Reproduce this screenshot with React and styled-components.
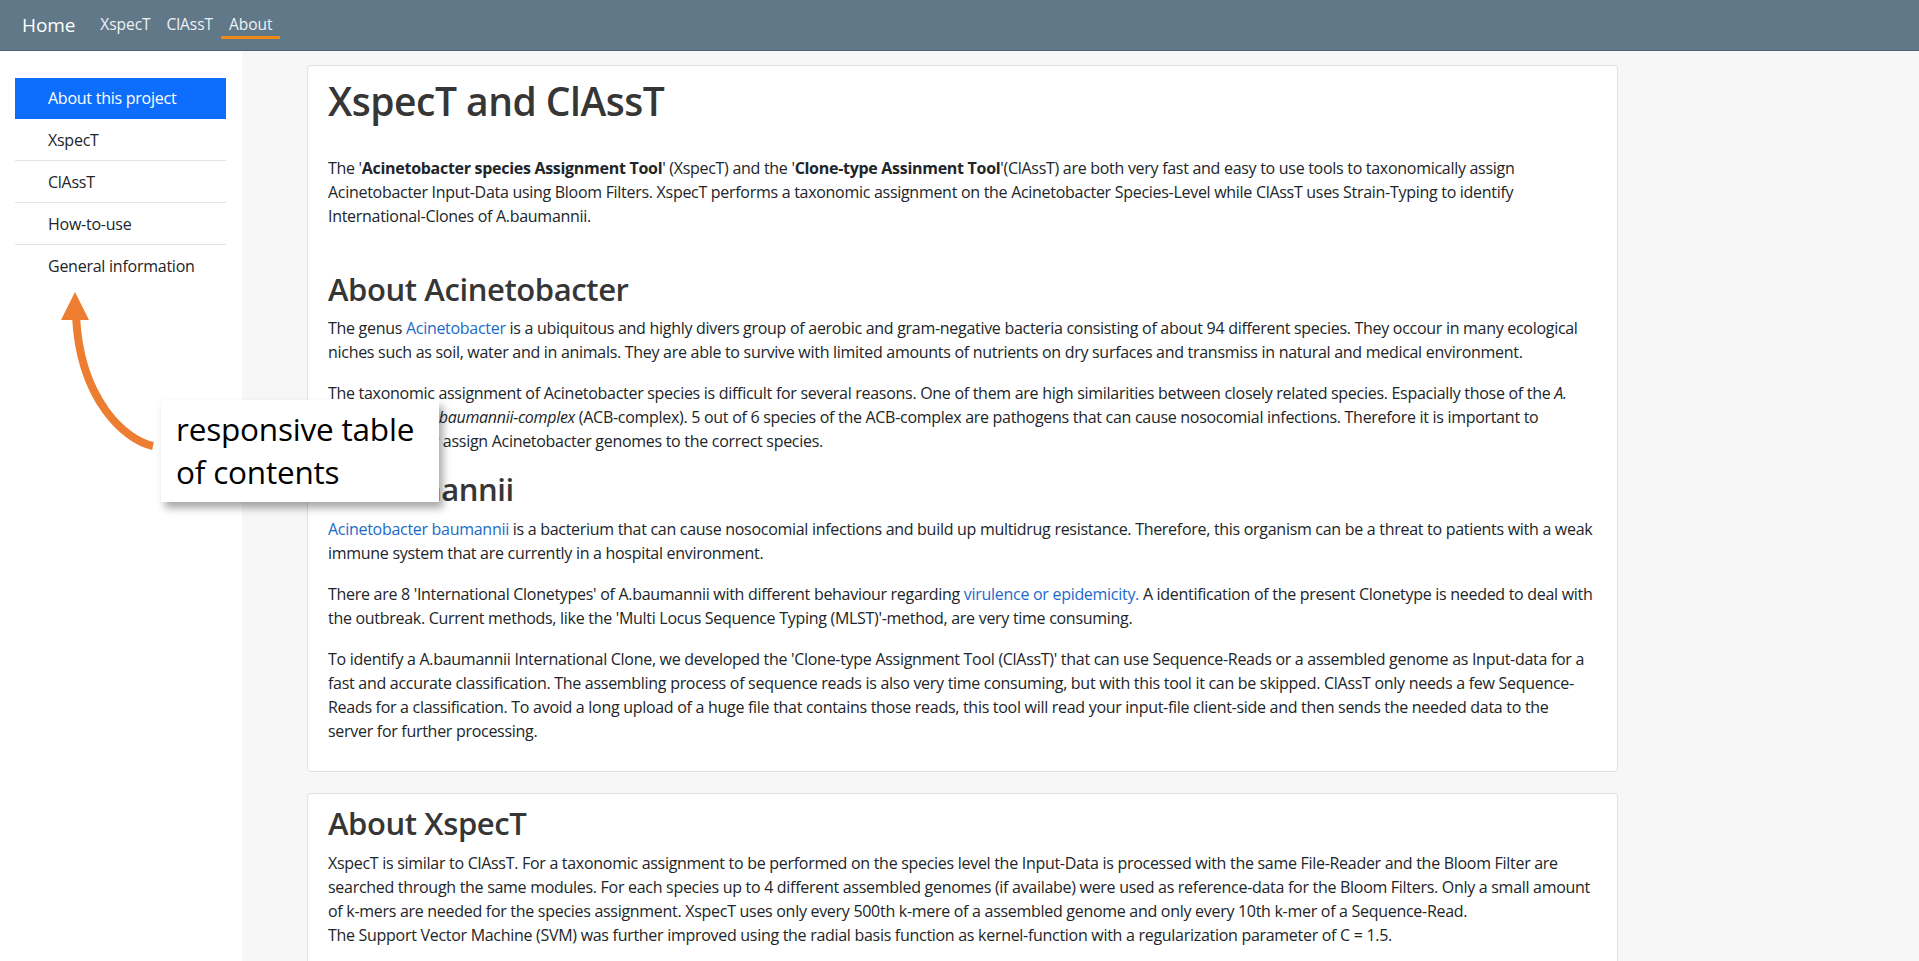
import React from "react";
import styled, { createGlobalStyle } from "styled-components";

const GlobalStyle = createGlobalStyle`
  html, body {
    margin: 0;
    padding: 0;
  }
  body {
    font-family: "Open Sans", "Noto Sans", sans-serif;
    background: #f7f7f7;
    color: #212529;
  }
  * { box-sizing: border-box; }
`;

const Page = styled.div`
  position: relative;
  min-height: 961px;
  display: flex;
  flex-direction: column;
`;

const NavBar = styled.nav`
  height: 51px;
  flex: none;
  display: flex;
  align-items: flex-start;
  padding-left: 22px;
  background: #617889;
  border-bottom: 1px solid #4d6272;
`;

const Brand = styled.a`
  margin-top: 13px;
  margin-right: 17px;
  font-size: 19px;
  line-height: 24px;
  color: #ffffff;
  text-decoration: none;
  letter-spacing: -0.1px;
`;

const NavLink = styled.a`
  margin-top: 14px;
  padding: 0 8px 2px;
  font-size: 15.5px;
  line-height: 20px;
  letter-spacing: -0.05px;
  color: #eef2f5;
  text-decoration: none;
  border-bottom: 3px solid ${(p) => (p.$active ? "#ef8a17" : "transparent")};
  border-radius: 1px;
`;

const Layout = styled.div`
  flex: 1;
  display: flex;
  align-items: stretch;
`;

const Sidebar = styled.aside`
  width: 242px;
  flex: none;
  background: #ffffff;
  padding: 27px 16px 0 15px;
`;

const TocList = styled.ul`
  list-style: none;
  margin: 0;
  padding: 0;
`;

const TocItem = styled.li`
  padding: ${(p) => (p.$active ? "8px 0 9px 33px" : "9px 0 8px 33px")};
  font-size: 16px;
  line-height: 24px;
  letter-spacing: -0.25px;
  background: ${(p) => (p.$active ? "#0d6efd" : "transparent")};
  color: ${(p) => (p.$active ? "#ffffff" : "#212529")};
  border-bottom: ${(p) => (p.$last || p.$active ? "none" : "1px solid #e4e4e4")};
`;

const Main = styled.main`
  flex: 1;
  padding: 14px 0 0 65px;
  display: flex;
  flex-direction: column;
  gap: 21px;
`;

const Card = styled.section`
  width: 1311px;
  background: #ffffff;
  border: 1px solid #dfdfdf;
  border-radius: 4px;
  padding: 10px 21px ${(p) => p.$pb || 11}px 20px;
`;

const Title = styled.h1`
  margin: 0 0 30px;
  font-size: 39px;
  line-height: 50px;
  font-weight: 600;
  color: #363636;
  letter-spacing: -0.5px;
`;

const Heading = styled.h2`
  margin: ${(p) => p.$mt || 0}px 0 ${(p) => p.$mb || 9.5}px;
  font-size: 31px;
  line-height: 38px;
  font-weight: 600;
  color: #363636;
  letter-spacing: -0.4px;
`;

const Para = styled.p`
  margin: 0 0 ${(p) => p.$mb ?? 17}px;
  font-size: 16px;
  line-height: 24px;
  letter-spacing: -0.29px;
  color: #212529;
`;

const Link = styled.a`
  color: #1b6ac9;
  text-decoration: none;
`;

const Callout = styled.div`
  position: absolute;
  left: 161px;
  top: 400px;
  width: 278px;
  height: 102px;
  padding: 7px 0 0 15px;
  background: #ffffff;
  box-shadow: 4px 6px 8px rgba(0, 0, 0, 0.35);
  font-size: 31.5px;
  line-height: 43px;
  color: #000000;
  letter-spacing: -0.2px;
  white-space: nowrap;
`;

const ArrowSvg = styled.svg`
  position: absolute;
  left: 0;
  top: 0;
  width: 200px;
  height: 520px;
  pointer-events: none;
`;

const tocItems = [
  "About this project",
  "XspecT",
  "ClAssT",
  "How-to-use",
  "General information",
];

export default function App() {
  return (
    <Page>
      <GlobalStyle />
      <NavBar>
        <Brand>Home</Brand>
        <NavLink>XspecT</NavLink>
        <NavLink>ClAssT</NavLink>
        <NavLink $active>About</NavLink>
      </NavBar>
      <Layout>
        <Sidebar>
          <TocList>
            {tocItems.map((t, i) => (
              <TocItem key={t} $active={i === 0} $last={i === tocItems.length - 1}>
                {t}
              </TocItem>
            ))}
          </TocList>
        </Sidebar>
        <Main>
          <Card>
            <Title>XspecT and ClAssT</Title>
            <Para $mb={42}>
              The '<b>Acinetobacter species Assignment Tool</b>' (XspecT) and the '
              <b>Clone-type Assinment Tool</b>'(ClAssT) are both very fast and easy to use
              tools to taxonomically assign Acinetobacter Input-Data using Bloom Filters.
              XspecT performs a taxonomic assignment on the Acinetobacter Species-Level while
              ClAssT uses Strain-Typing to identify International-Clones of A.baumannii.
            </Para>
            <Heading $mb={7.5}>About Acinetobacter</Heading>
            <Para>
              The genus <Link>Acinetobacter</Link> is a ubiquitous and highly divers group of
              aerobic and gram-negative bacteria consisting of about 94 different species. They
              occour in many ecological niches such as soil, water and in animals. They are able
              to survive with limited amounts of nutrients on dry surfaces and transmiss in
              natural and medical environment.
            </Para>
            <Para>
              The taxonomic assignment of Acinetobacter species is difficult for several
              reasons. One of them are high similarities between closely related species.
              Espacially those of the <i>A. calcoaceticus-A. baumannii-complex</i> (ACB-complex).
              5 out of 6 species of the ACB-complex are pathogens that can cause nosocomial
              infections. Therefore it is important to unambiguously assign Acinetobacter
              genomes to the correct species.
            </Para>
            <Heading>A.baumannii</Heading>
            <Para>
              <Link>Acinetobacter baumannii</Link> is a bacterium that can cause nosocomial
              infections and build up multidrug resistance. Therefore, this organism can be a
              threat to patients with a weak immune system that are currently in a hospital
              environment.
            </Para>
            <Para>
              There are 8 'International Clonetypes' of A.baumannii with different behaviour
              regarding <Link>virulence or epidemicity.</Link> A identification of the present
              Clonetype is needed to deal with the outbreak. Current methods, like the 'Multi
              Locus Sequence Typing (MLST)'-method, are very time consuming.
            </Para>
            <Para>
              To identify a A.baumannii International Clone, we developed the 'Clone-type
              Assignment Tool (ClAssT)' that can use Sequence-Reads or a assembled genome as
              Input-data for a fast and accurate classification. The assembling process of
              sequence reads is also very time consuming, but with this tool it can be skipped.
              ClAssT only needs a few Sequence-Reads for a classification. To avoid a long upload
              of a huge file that contains those reads, this tool will read your input-file
              client-side and then sends the needed data to the server for further processing.
            </Para>
          </Card>
          <Card $pb={40}>
            <Heading $mb={9}>About XspecT</Heading>
            <Para>
              XspecT is similar to ClAssT. For a taxonomic assignment to be performed on the
              species level the Input-Data is processed with the same File-Reader and the Bloom
              Filter are searched through the same modules. For each species up to 4 different
              assembled genomes (if availabe) were used as reference-data for the Bloom Filters.
              Only a small amount of k-mers are needed for the species assignment. XspecT uses
              only every 500th k-mere of a assembled genome and only every 10th k-mer of a
              Sequence-Read.
              <br />
              The Support Vector Machine (SVM) was further improved using the radial basis
              function as kernel-function with a regularization parameter of C = 1.5.
            </Para>
          </Card>
        </Main>
      </Layout>
      <ArrowSvg viewBox="0 0 200 520" aria-hidden="true">
        <path
          d="M153,446 C125,440 80,400 76,316"
          fill="none"
          stroke="#ed7d31"
          strokeWidth="8"
        />
        <polygon points="61,320 89,320 75,292" fill="#ed7d31" />
      </ArrowSvg>
      <Callout>
        responsive table
        <br />
        of contents
      </Callout>
    </Page>
  );
}
